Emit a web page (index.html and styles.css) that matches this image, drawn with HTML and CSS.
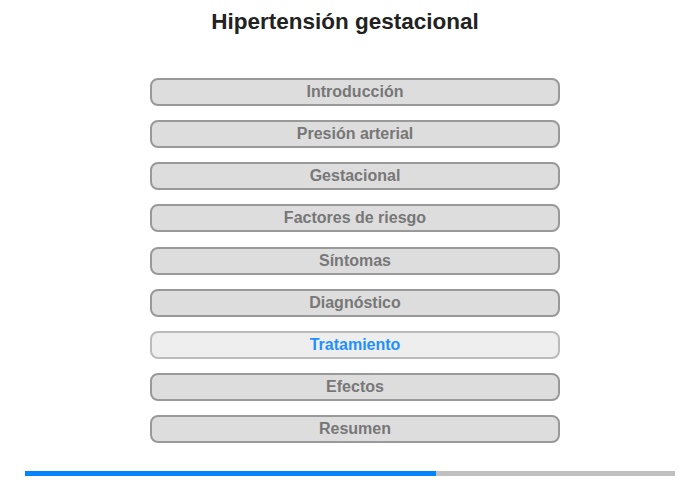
FILE: index.html
```html
<!DOCTYPE html>
<html lang="es">
<head>
<meta charset="utf-8">
<title>Hipertensión gestacional</title>
<link rel="stylesheet" href="styles.css">
</head>
<body>
<div class="page">
  <h1 class="title">Hipertensión gestacional</h1>
  <nav class="menu">
    <div class="item">Introducción</div>
    <div class="item">Presión arterial</div>
    <div class="item">Gestacional</div>
    <div class="item">Factores de riesgo</div>
    <div class="item">Síntomas</div>
    <div class="item">Diagnóstico</div>
    <div class="item active">Tratamiento</div>
    <div class="item">Efectos</div>
    <div class="item">Resumen</div>
  </nav>
  <div class="progress"><div class="progress-fill" style="width: 411px"></div></div>
</div>
</body>
</html>
```
FILE: styles.css
```css
html, body {
  margin: 0;
  padding: 0;
  background: #ffffff;
}
body {
  font-family: "Liberation Sans", Arial, sans-serif;
  width: 700px;
  height: 480px;
  overflow: hidden;
}
.page {
  display: flex;
  flex-direction: column;
  align-items: center;
}
.title {
  margin: 0 10px 0 0;
  padding-top: 9px;
  font-size: 22.5px;
  line-height: 26px;
  font-weight: bold;
  color: #222222;
  text-align: center;
}
.menu {
  margin: 43px 0 0 10px;
  width: 410px;
  display: flex;
  flex-direction: column;
  gap: 14.125px;
}
.item {
  box-sizing: border-box;
  height: 28px;
  border: 2px solid #999999;
  border-radius: 8px;
  background: #dddddd;
  color: #777777;
  font-size: 16px;
  font-weight: bold;
  line-height: 24px;
  text-align: center;
}
.item.active {
  background: #eeeeee;
  border-color: #bbbbbb;
  color: #1e90ff;
}
.progress {
  margin-top: 28px;
  width: 650px;
  height: 5px;
  background: #c0c0c0;
  display: flex;
}
.progress-fill {
  height: 100%;
  background: #0084ff;
}
```
